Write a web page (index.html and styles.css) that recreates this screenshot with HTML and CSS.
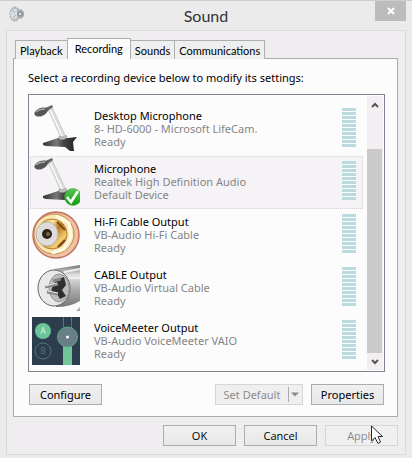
FILE: index.html
```html
<!DOCTYPE html>
<html lang="en">
<head>
<meta charset="utf-8">
<title>Sound</title>
<link rel="stylesheet" href="styles.css">
</head>
<body>
<svg class="defs" aria-hidden="true">
  <defs>
    <linearGradient id="foot" x1="0" x2="1"><stop offset="0" stop-color="#333"/><stop offset=".4" stop-color="#777"/><stop offset=".6" stop-color="#444"/><stop offset="1" stop-color="#222"/></linearGradient>
    <linearGradient id="gold" x1="0" y1="0" x2="1" y2="1"><stop offset="0" stop-color="#c98a3a"/><stop offset=".3" stop-color="#ffe79a"/><stop offset=".5" stop-color="#b8781f"/><stop offset=".75" stop-color="#f6cf72"/><stop offset="1" stop-color="#8a4d18"/></linearGradient>
    <linearGradient id="metal" x1="0" y1="0" x2="0" y2="1"><stop offset="0" stop-color="#777"/><stop offset=".25" stop-color="#e4e4e4"/><stop offset=".6" stop-color="#aaa"/><stop offset="1" stop-color="#777"/></linearGradient>
    <linearGradient id="green" x1="0" y1="0" x2="0" y2="1"><stop offset="0" stop-color="#5ac84e"/><stop offset="1" stop-color="#119d10"/></linearGradient>
    <symbol id="mic" viewBox="0 0 48 48">
      <path d="M11 38 26 33 36 33 45 32 41 37 42 46 38 46 33 42 14 41 11 40Z" fill="url(#foot)"/>
      <path d="M16 4 20 2 33 30Q31 33 28 31Z" fill="#dedede" stroke="#aaa" stroke-width=".5"/>
      <path d="M18 5 30 31" stroke="#fafafa" stroke-width="1.500" fill="none"/>
      <path d="M27 31Q31 34 34 30L35 33Q31 36 27 34Z" fill="#c4c4c4" stroke="#777" stroke-width=".5"/>
      <path d="M11 4 20 0 21 2 13 8Z" fill="#666"/>
      <ellipse cx="9" cy="7" rx="7" ry="4" transform="rotate(-22 9 7)" fill="#555"/>
      <path d="M4 7Q7 4 13 4" fill="none" stroke="#aaa" stroke-width="1.500"/>
    </symbol>
  </defs>
</svg>
<div class="window">
  <header class="titlebar">
    <svg class="app-icon" viewBox="0 0 16 16" aria-hidden="true">
      <ellipse cx="6" cy="8" rx="5" ry="7" fill="#bcc4c9" stroke="#969da2" stroke-dasharray="2 1"/>
      <ellipse cx="5" cy="8" rx="3.500" ry="5" fill="#d9e0e4"/>
      <path d="M8 5 12 3 15 6V10L12 13 8 10Z" fill="#a5adb2"/>
      <circle cx="11" cy="8" r="2" fill="#dce3e7" stroke="#748087"/>
      <path d="M3 4 6 7M4 12 7 9" stroke="#a0a8ad"/>
    </svg>
    <h1>Sound</h1>
    <button class="close" aria-label="Close"><svg viewBox="0 0 8 8" aria-hidden="true"><path d="M1 1 7 7M7 1 1 7"/></svg></button>
  </header>
  <main class="client">
    <div class="tabs" role="tablist">
      <button class="tab" role="tab">Playback</button>
      <button class="tab active" role="tab" aria-selected="true">Recording</button>
      <button class="tab" role="tab">Sounds</button>
      <button class="tab" role="tab">Communications</button>
    </div>
    <section class="panel" role="tabpanel">
      <p class="hint">Select a recording device below to modify its settings:</p>
      <div class="listbox">
        <ul class="devices">
          <li class="device">
            <svg class="icon" viewBox="0 0 48 48" aria-hidden="true"><use href="#mic"/></svg>
            <div class="info"><strong>Desktop Microphone</strong><span>8- HD-6000 - Microsoft LifeCam.</span><span>Ready</span></div>
            <div class="meter"></div>
          </li>
          <li class="device selected">
            <svg class="icon" viewBox="0 0 48 48" aria-hidden="true"><use href="#mic"/>
              <circle cx="41" cy="39" r="8.500" fill="url(#green)" stroke="#3c9c38" stroke-width=".5"/>
              <path d="M35 39 39 44 46 33" fill="none" stroke="#fff" stroke-width="2.500"/>
            </svg>
            <div class="info"><strong>Microphone</strong><span>Realtek High Definition Audio</span><span>Default Device</span></div>
            <div class="meter"></div>
          </li>
          <li class="device">
            <svg class="icon" viewBox="0 0 48 48" aria-hidden="true">
              <circle cx="24" cy="24" r="23" fill="#ecc3a5" stroke="#c4705c" stroke-width="1.500"/>
              <circle cx="22" cy="23" r="20" fill="#fbe6b0" stroke="#c98b4a"/>
              <path d="M24 5 37 12 39 26 32 38 20 42" fill="none" stroke="#fffbe9" stroke-width="3"/>
              <circle cx="20" cy="23" r="15" fill="url(#gold)" stroke="#b67c32"/>
              <path d="M25 11 33 19M26 36 33 29" stroke="#7a4a18" stroke-width="2"/>
              <ellipse cx="15" cy="23" rx="11" ry="12" fill="#dedbdb" stroke="#bdb3ab"/>
              <circle cx="15" cy="23" r="5" fill="#302218"/>
              <circle cx="16" cy="23" r="2" fill="#796554"/>
            </svg>
            <div class="info"><strong>Hi-Fi Cable Output</strong><span>VB-Audio Hi-Fi Cable</span><span>Ready</span></div>
            <div class="meter"></div>
          </li>
          <li class="device">
            <svg class="icon" viewBox="0 0 48 48" aria-hidden="true">
              <path d="M22 5 48 1V37Q38 43 24 43Z" fill="url(#metal)"/>
              <path d="M32 8 48 5M36 14H48" stroke="#eee" stroke-width="2"/>
              <ellipse cx="22" cy="24" rx="16" ry="18" fill="#e9e9e9" stroke="#666"/>
              <ellipse cx="27" cy="24" rx="10" ry="14" fill="#bbb" stroke="#999"/>
              <path d="M24 16 32 13 34 21 30 26 34 32 28 35 25 30 19 28 20 24Z" fill="#303030"/>
              <path d="M13 23 26 20M15 28 26 30M21 17 29 15" stroke="#888" stroke-width="3"/>
              <path d="M13 22 25 19M16 27 26 29" stroke="#eee"/>
              <path d="M44 47 48 43V47Z" fill="#aaa"/>
            </svg>
            <div class="info"><strong>CABLE Output</strong><span>VB-Audio Virtual Cable</span><span>Ready</span></div>
            <div class="meter"></div>
          </li>
          <li class="device">
            <svg class="icon" viewBox="0 0 48 48" aria-hidden="true">
              <path d="M0 0H48V48H0Z" fill="#2c3d4d"/>
              <circle cx="11" cy="14" r="8" fill="#6bc496"/>
              <circle cx="11" cy="34" r="8" fill="none" stroke="#54717d"/>
              <text x="11" y="17" class="glyph-a">A</text><text x="11" y="37" class="glyph-b">B</text>
              <path d="M31.500 0V48M39.500 0V48" stroke="#53776f"/>
              <path d="M31 28H40V48H31Z" fill="#70c699"/>
              <circle cx="35.500" cy="20" r="10" fill="#687f86" stroke="#5ba383"/>
              <circle cx="35.500" cy="20" r="1.500" fill="#fff"/>
            </svg>
            <div class="info"><strong>VoiceMeeter Output</strong><span>VB-Audio VoiceMeeter VAIO</span><span>Ready</span></div>
            <div class="meter"></div>
          </li>
        </ul>
        <div class="scrollbar">
          <button class="arrow" aria-label="Scroll up"><svg viewBox="0 0 8 6" aria-hidden="true"><path d="M1 5 4 2 7 5"/></svg></button>
          <div class="track"><div class="thumb"></div></div>
          <button class="arrow down" aria-label="Scroll down"><svg viewBox="0 0 8 6" aria-hidden="true"><path d="M1 1 4 4 7 1"/></svg></button>
        </div>
      </div>
      <div class="actions">
        <button class="btn">Configure</button>
        <div class="split">
          <button class="btn" disabled>Set Default</button>
          <button class="btn drop" disabled aria-label="More default options"><svg viewBox="0 0 10 5" aria-hidden="true"><path d="M0 0H10L5 5Z"/></svg></button>
        </div>
        <button class="btn">Properties</button>
      </div>
    </section>
    <footer class="footer">
      <button class="btn">OK</button>
      <button class="btn">Cancel</button>
      <div class="apply">
        <button class="btn" disabled>Apply</button>
        <svg class="pointer" viewBox="0 0 12 20" aria-hidden="true"><path d="M.5 1V16L4 12.500 7 18.500 9.500 17 7 11.500H11.500Z"/></svg>
      </div>
    </footer>
  </main>
</div>
</body>
</html>
```
FILE: styles.css
```css
* { box-sizing: border-box; }
body {
  margin: 0;
  background: #ebebeb;
  color: #000;
  font: 11px/13px "Noto Sans", "Open Sans", sans-serif;
}
button { font: inherit; color: inherit; margin: 0; padding: 0; }
svg { display: block; }
.defs { position: absolute; width: 0; height: 0; }
.window { min-height: 100vh; padding: 0 6px 3px; border-top: 1px solid #c8cfd6; }
.titlebar { display: grid; grid-template-columns: 31px 1fr 31px; height: 29px; }
.app-icon { width: 16px; height: 16px; margin: 5px 0 0 3px; }
h1 { margin: 0; font: 400 16px/29px Lato, sans-serif; text-align: center; color: #333; }
.close {
  width: 31px; height: 20px; border: 0; background: #bcbcbc;
  display: grid; place-items: center;
}
.close svg { width: 8px; height: 8px; stroke: #fff; stroke-width: 2; }
.client { border: 1px solid #dcdadc; background: #f0edf0; padding: 7px 7px 8px 6px; }
.tabs { display: flex; align-items: flex-end; padding-left: 2px; height: 21px; position: relative; z-index: 1; }
.tab {
  height: 19px; padding: 0 4px; margin-right: -1px;
  border: 1px solid #acb0ac; border-bottom: 0; background: #eeefee;
  font-family: Lato, sans-serif;
}
.tab.active { position: relative; height: 21px; padding: 0 7px 1px; background: #fcfcfc; }
.panel {
  border: 1px solid #a9aca9; background: #fcfcfc;
  margin-top: -1px; padding: 12px 12px 11px 14px;
}
.hint { margin: 0 0 9px; line-height: 14px; }
.listbox { display: flex; border: 1px solid #7f8490; padding: 1px; background: #fcfcfc; }
.devices { flex: 1; list-style: none; margin: 0; padding: 7px 4px 2px 0; }
.device { display: flex; height: 53px; padding: 1px 6px 0 1px; border: 1px solid transparent; }
.device.selected { background: #f6f3f7; border: 1px dotted #d5d2d5; }
.icon { width: 48px; height: 48px; }
.info { flex: 1; padding: 4px 0 0 14px; color: #858585; }
.info > * { display: block; }
.info strong { font-weight: 400; color: #000; }
.meter {
  width: 14px; height: 39px; margin-top: 3px;
  background: repeating-linear-gradient(#bcd9df 0 3px, #fcfcfc 3px 4px);
}
.glyph-a, .glyph-b { font-size: 8px; text-anchor: middle; fill: #d8f4e6; }
.glyph-b { fill: #54717d; }
.scrollbar { width: 16px; display: flex; flex-direction: column; background: #f2eef2; padding-right: 1px; }
.arrow { height: 17px; border: 0; background: none; display: grid; place-items: center; }
.arrow svg { width: 8px; height: 6px; fill: none; stroke: #555; stroke-width: 2; }
.track { flex: 1; display: flex; flex-direction: column; justify-content: flex-end; }
.thumb { height: 85%; background: #cacaca; }
.actions { display: flex; margin-top: 12px; padding: 0 1px; }
.btn { width: 73px; height: 21px; border: 1px solid #acacac; background: linear-gradient(#f0f0f0, #e8e8e8); }
.btn:disabled { color: #8b8b8b; border-color: #d6d6d6; background: #f0eff0; }
.split { display: flex; margin: 0 8px 0 auto; }
.split .btn { border-right: 0; }
.split .drop {
  width: 15px; border-right: 1px solid #d6d6d6; border-left: 0;
  display: grid; place-items: center;
  background: linear-gradient(#aaa, #aaa) 0 2px / 1px 15px no-repeat #f0eff0;
}
.drop svg { width: 8px; height: 5px; fill: #8b8b8b; }
.footer { display: flex; justify-content: flex-end; gap: 8px; padding-top: 8px; }
.footer .btn { font-family: "Open Sans", sans-serif; }
.apply { position: relative; }
.pointer { position: absolute; left: 46px; top: 0; width: 12px; height: 20px; fill: #fff; stroke: #25252f; }
```
